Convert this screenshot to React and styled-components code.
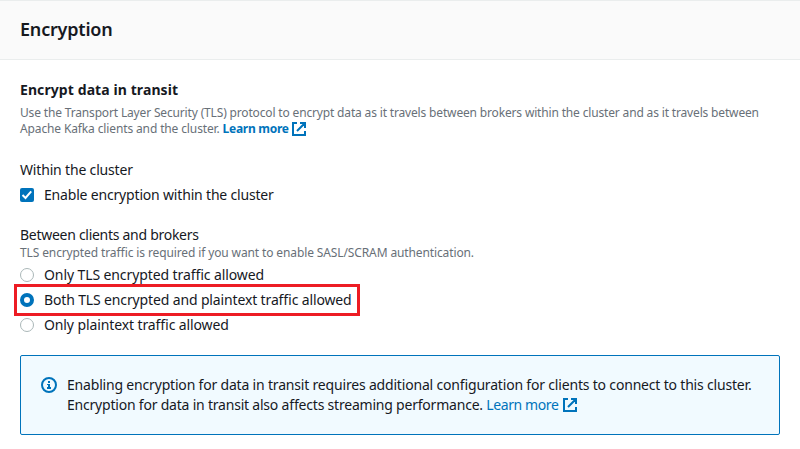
import React from 'react';
import styled, { createGlobalStyle } from 'styled-components';

const Global = createGlobalStyle`
  * { box-sizing: border-box; }
  body { margin: 0; background: #fff; color: #16191f; font-family: "Noto Sans", sans-serif; font-size: 14px; font-feature-settings: "liga" 1; }
`;
const Panel = styled.main`display: flex; flex-direction: column; width: 800px; height: 449px; overflow: hidden;`;
const Header = styled.header`
  display: flex; flex: none; align-items: center; height: 60px; padding: 0 20px 2px;
  background: #fafafa; border-top: 1px solid #eaeded; border-bottom: 1px solid #eaeded;
`;
const Title = styled.h2`margin: 0; font-size: 18px; line-height: 22px; font-weight: 600; letter-spacing: -0.2px;`;
const Body = styled.div`display: flex; flex: none; flex-direction: column; padding: 20px;`;
const Subtitle = styled.h3`margin: 0 0 5px; font-size: 14px; line-height: 20px; font-weight: 700; letter-spacing: 0.09px;`;
const Hint = styled.div`
  height: 16px; font-size: 12px; line-height: 16px; color: #687078; white-space: nowrap; letter-spacing: ${p => p.$ls}px;
`;
const Link = styled.a`
  color: #0073bb; font-weight: ${p => (p.$bold ? 700 : 400)}; letter-spacing: ${p => p.$ls}px; text-decoration: none;
`;
const Group = styled.section`display: flex; flex-direction: column; align-items: flex-start; margin-top: ${p => p.$top}px;`;
const Label = styled.div`height: 20px; line-height: 20px; letter-spacing: ${p => p.$ls}px;`;
const Choice = styled.label`
  display: flex; align-items: center; gap: 10px; height: 20px; margin-top: 5px; line-height: 20px;
  white-space: nowrap; letter-spacing: ${p => p.$ls}px;
`;
const Choices = styled.div`display: flex; flex-direction: column; align-items: flex-start; margin-top: -1px;`;
const Highlighted = styled.div`
  width: 346px; height: 32px; margin: -1px 0 -6px -6px; padding: 1px 0 0 3px; border: 3px solid #ed1c24;
  ${Choice} { margin-top: 2px; }
`;
const Control = styled.svg`width: 14px; height: 14px; flex: none;`;
const Alert = styled.aside`
  display: flex; height: 80px; margin-top: 20px; padding: 19px; gap: 10px;
  border: 1px solid #0073bb; border-radius: 2px; background: #f1faff;
`;
const InfoSvg = styled.svg`width: 16px; height: 16px; margin: 2px 0 0 1px; flex: none;`;
const AlertText = styled.div`display: flex; flex-direction: column;`;
const AlertLine = styled.div`height: 20px; line-height: 20px; white-space: nowrap; letter-spacing: ${p => p.$ls}px;`;
const ExtSvg = styled.svg`width: 14px; height: 14px; margin-left: ${p => p.$gap}px; vertical-align: ${p => p.$drop}px;`;

const External = ({ drop, gap }) => (
  <ExtSvg $drop={drop} $gap={gap} viewBox="0 0 14 14" fill="none" stroke="#0073bb" strokeWidth="2">
    <path d="M5 1H1v12h12V9M8 1h5v5M5 9l8-8" />
  </ExtSvg>
);

const Checkbox = () => (
  <Control viewBox="0 0 14 14">
    <rect width="14" height="14" rx="2" fill="#0073bb" />
    <path d="M2.5 7l3 3 5.7-6.6" fill="none" stroke="#fff" strokeWidth="2" />
  </Control>
);

const Radio = ({ on }) => (
  <Control viewBox="0 0 14 14">
    {on ? (
      <circle cx="7" cy="7" r="5" fill="#fff" stroke="#0073bb" strokeWidth="4" />
    ) : (
      <circle cx="7" cy="7" r="6.5" fill="#fff" stroke="#aab7b8" />
    )}
  </Control>
);

const Info = () => (
  <InfoSvg viewBox="0 0 16 16">
    <circle cx="8" cy="8" r="7" fill="none" stroke="#0073bb" strokeWidth="2" />
    <path d="M7 4h2v2H7zM6 7h3v3h1v2H6v-2h1V8H6z" fill="#0073bb" />
  </InfoSvg>
);

export default function App() {
  return (
    <Panel>
      <Global />
      <Header><Title>Encryption</Title></Header>
      <Body>
        <Subtitle>Encrypt data in transit</Subtitle>
        <Hint $ls={-0.16}>Use the Transport Layer Security (TLS) protocol to encrypt data as it travels between brokers within the cluster and as it travels between</Hint>
        <Hint $ls={-0.13}>Apache Kafka clients and the cluster. <Link $bold $ls={-0.28}>Learn more<External drop={-3} gap={3.5} /></Link></Hint>
        <Group $top={23}>
          <Label $ls={-0.17}>Within the cluster</Label>
          <Choice $ls={-0.18}><Checkbox />Enable encryption within the cluster</Choice>
        </Group>
        <Group $top={20}>
          <Label $ls={-0.28}>Between clients and brokers</Label>
          <Hint $ls={-0.12}>TLS encrypted traffic is required if you want to enable SASL/SCRAM authentication.</Hint>
          <Choices>
            <Choice $ls={-0.1}><Radio />Only TLS encrypted traffic allowed</Choice>
            <Highlighted><Choice $ls={-0.14}><Radio on />Both TLS encrypted and plaintext traffic allowed</Choice></Highlighted>
            <Choice $ls={-0.11}><Radio />Only plaintext traffic allowed</Choice>
          </Choices>
        </Group>
        <Alert>
          <Info />
          <AlertText>
            <AlertLine $ls={-0.185}>Enabling encryption for data in transit requires additional configuration for clients to connect to this cluster.</AlertLine>
            <AlertLine $ls={-0.21}>Encryption for data in transit also affects streaming performance. <Link $ls={-0.4}>Learn more<External drop={-2} gap={4.8} /></Link></AlertLine>
          </AlertText>
        </Alert>
      </Body>
    </Panel>
  );
}
